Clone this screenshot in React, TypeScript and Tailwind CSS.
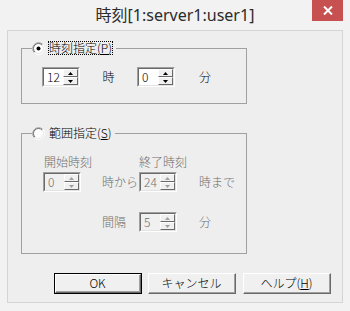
import React from "react";

function Radio({ checked }: { checked?: boolean }) {
  return (
    <svg width="13" height="13" viewBox="0 0 13 13" className="shrink-0">
      <circle cx="6.5" cy="6.5" r="6" fill="#ffffff" />
      <path d="M2.26 10.74 A6 6 0 0 1 10.74 2.26" stroke="#a0a0a0" fill="none" />
      <path d="M10.74 2.26 A6 6 0 0 1 2.26 10.74" stroke="#ffffff" fill="none" />
      <path d="M2.96 10.04 A5 5 0 0 1 10.04 2.96" stroke="#696969" fill="none" />
      <path d="M10.04 2.96 A5 5 0 0 1 2.96 10.04" stroke="#e3e3e3" fill="none" />
      {checked && <circle cx="6.5" cy="6.5" r="2" fill="#000000" />}
    </svg>
  );
}

function SpinBtn({ up, disabled }: { up?: boolean; disabled?: boolean }) {
  const c = disabled ? "#a0a0a0" : "#000000";
  return (
    <div className="flex h-[8px] w-[15px] items-center justify-center border-t border-l border-t-white border-l-white border-b border-r border-b-[#696969] border-r-[#696969] bg-[#f0f0f0]">
      <svg width="5" height="3" viewBox="0 0 5 3">
        {up ? <path d="M2.5 0 L5 3 L0 3 Z" fill={c} /> : <path d="M0 0 L5 0 L2.5 3 Z" fill={c} />}
      </svg>
    </div>
  );
}

function Spinner({ value, disabled }: { value: string; disabled?: boolean }) {
  return (
    <div className="flex h-[20px] w-[38px] shrink-0 border-t border-l border-t-[#a0a0a0] border-l-[#a0a0a0] border-b border-r border-b-white border-r-white">
      <div className="flex flex-1 border-t border-l border-t-[#696969] border-l-[#696969] border-b border-r border-b-[#e3e3e3] border-r-[#e3e3e3]">
        <div
          className={
            "flex-1 pl-[3px] text-[12px] leading-[16px] " +
            (disabled ? "bg-[#f0f0f0] text-[#6d6d6d]" : "bg-white text-black")
          }
        >
          {value}
        </div>
        <div className="flex w-[15px] flex-col">
          <SpinBtn up disabled={disabled} />
          <SpinBtn disabled={disabled} />
        </div>
      </div>
    </div>
  );
}

function Button({ children, def }: { children: React.ReactNode; def?: boolean }) {
  if (def) {
    return (
      <div className="flex h-[21px] w-[88px] border border-[#000000]">
        <div className="flex flex-1 border-t border-l border-t-white border-l-white border-b border-r border-b-[#696969] border-r-[#696969]">
          <div className="flex flex-1 items-center justify-center border-b border-r border-b-[#a0a0a0] border-r-[#a0a0a0] bg-[#f0f0f0] text-[12px] leading-[16px] text-black">
            {children}
          </div>
        </div>
      </div>
    );
  }
  return (
    <div className="flex h-[21px] w-[88px] border-t border-l border-t-white border-l-white border-b border-r border-b-[#696969] border-r-[#696969]">
      <div className="flex flex-1 items-center justify-center border-b border-r border-b-[#a0a0a0] border-r-[#a0a0a0] bg-[#f0f0f0] text-[12px] leading-[16px] text-black">
        {children}
      </div>
    </div>
  );
}

export default function App() {
  return (
    <div className="flex h-[311px] w-[350px] flex-col bg-[#f2f2f2] font-['Noto_Sans_CJK_JP','Noto_Sans',sans-serif] font-light text-black">
      {/* Title bar */}
      <div className="relative flex h-[30px] shrink-0 items-center justify-center">
        <span className="font-['Noto_Sans','Noto_Sans_CJK_JP',sans-serif] text-[16px] font-normal leading-[20px] text-[#2b2b2b]">
          時刻[1:server1:user1]
        </span>
        <div className="absolute right-[7px] top-0 flex h-[21px] w-[31px] items-center justify-center bg-[#c75050]">
          <svg width="10" height="9" viewBox="0 0 10 9">
            <path d="M1 0.5 L9 8.5 M9 0.5 L1 8.5" stroke="#ffffff" strokeWidth="2" />
          </svg>
        </div>
      </div>

      {/* Client area */}
      <div className="mx-[7px] mb-[8px] flex flex-1 flex-col border border-[#d4d4d4] bg-[#eeeeee]">
        {/* Group 1 */}
        <fieldset className="ml-[13px] mt-[9px] h-[64px] w-[226px] border border-[#a0a0a0]">
          <legend className="ml-[10px] flex h-[16px] items-center pr-[3px]">
            <Radio checked />
            <span className="ml-[3px] border border-dotted border-black px-[0px] text-[12px] leading-[12px]">
              時刻指定(<span className="underline">P</span>)
            </span>
          </legend>
          <div className="flex items-center pl-[20px] pt-[11px]">
            <Spinner value="12" />
            <div className="w-[57px] text-center text-[12px] leading-[16px]">時</div>
            <Spinner value="0" />
            <div className="ml-[24px] text-[12px] leading-[16px]">分</div>
          </div>
        </fieldset>

        {/* Group 2 */}
        <fieldset className="ml-[13px] mt-[21px] h-[129px] w-[226px] border border-[#a0a0a0]">
          <legend className="ml-[10px] flex h-[16px] items-center pr-[3px]">
            <Radio />
            <span className="ml-[4px] text-[12px] leading-[16px]">
              範囲指定(<span className="underline">S</span>)
            </span>
          </legend>
          <div className="flex flex-col pt-[13px] text-[12px] leading-[16px] text-[#6d6d6d]">
            <div className="flex pl-[22px]">
              <div className="w-[95px]">開始時刻</div>
              <div>終了時刻</div>
            </div>
            <div className="mt-[2px] flex items-center pl-[21px]">
              <Spinner value="0" disabled />
              <div className="w-[58px] pr-[1px] text-right">時から</div>
              <Spinner value="24" disabled />
              <div className="ml-[22px]">時まで</div>
            </div>
            <div className="mt-[20px] flex items-center pl-[21px]">
              <div className="w-[38px]" />
              <div className="w-[58px] pr-[13px] text-right">間隔</div>
              <Spinner value="5" disabled />
              <div className="ml-[22px]">分</div>
            </div>
          </div>
        </fieldset>

        {/* Buttons */}
        <div className="ml-[46px] mt-[19px] flex">
          <Button def>OK</Button>
          <div className="ml-[6px]">
            <Button>キャンセル</Button>
          </div>
          <div className="ml-[7px]">
            <Button>
              ヘルプ(<span className="underline">H</span>)
            </Button>
          </div>
        </div>
      </div>
    </div>
  );
}
